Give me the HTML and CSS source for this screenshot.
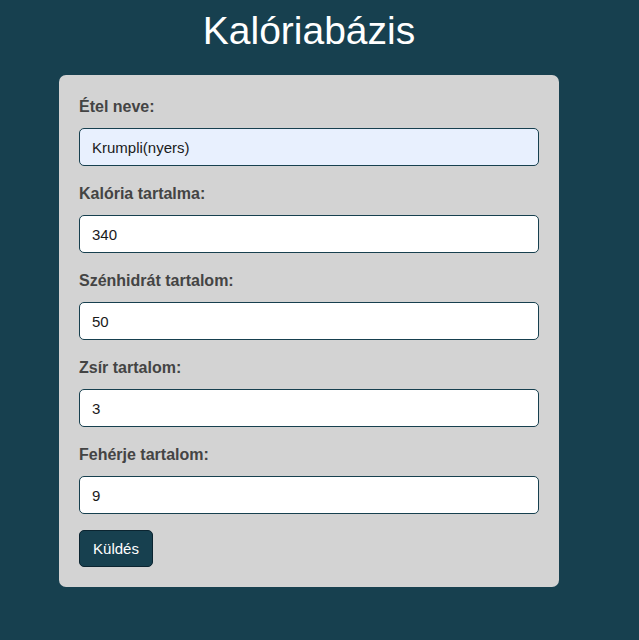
FILE: index.html
```html
<!DOCTYPE html>
<html lang="hu">
<head>
<meta charset="utf-8">
<title>Kalóriabázis</title>
<link rel="stylesheet" href="styles.css">
</head>
<body>
<div class="page">
  <h1 class="title">Kalóriabázis</h1>
  <form class="card">
    <div class="field">
      <label class="label" for="nev">Étel neve:</label>
      <input class="input input-filled" id="nev" type="text" value="Krumpli(nyers)">
    </div>
    <div class="field">
      <label class="label" for="kal">Kalória tartalma:</label>
      <input class="input" id="kal" type="text" value="340">
    </div>
    <div class="field">
      <label class="label" for="szh">Szénhidrát tartalom:</label>
      <input class="input" id="szh" type="text" value="50">
    </div>
    <div class="field">
      <label class="label" for="zsir">Zsír tartalom:</label>
      <input class="input" id="zsir" type="text" value="3">
    </div>
    <div class="field">
      <label class="label" for="feh">Fehérje tartalom:</label>
      <input class="input" id="feh" type="text" value="9">
    </div>
    <button class="button" type="button">Küldés</button>
  </form>
</div>
</body>
</html>
```
FILE: styles.css
```css
html, body {
  margin: 0;
  padding: 0;
  background: #17404f;
  font-family: "Liberation Sans", Arial, sans-serif;
}
.page {
  width: 618px;
  display: flex;
  flex-direction: column;
  align-items: center;
}
.title {
  margin: 8px 0 0;
  height: 67px;
  line-height: 46px;
  font-size: 39px;
  font-weight: normal;
  color: #ffffff;
}
.card {
  width: 500px;
  box-sizing: border-box;
  background: #d3d3d3;
  border-radius: 7px;
  padding: 20px;
  display: flex;
  flex-direction: column;
  align-items: flex-start;
}
.field {
  width: 100%;
  display: flex;
  flex-direction: column;
  margin-bottom: 16px;
}
.label {
  font-size: 16px;
  font-weight: bold;
  color: #444444;
  line-height: 24px;
  margin-bottom: 9px;
}
.input {
  box-sizing: border-box;
  width: 100%;
  height: 38px;
  border: 1px solid #17404f;
  border-radius: 5px;
  background: #ffffff;
  padding: 0 12px;
  font-family: "Liberation Sans", Arial, sans-serif;
  font-size: 15px;
  color: #1a1a1a;
  outline: none;
}
.input-filled {
  background: #e8f0fe;
}
.button {
  box-sizing: border-box;
  width: 74px;
  height: 37px;
  background: #17404f;
  border: 1px solid #0b2430;
  border-radius: 5px;
  color: #ffffff;
  font-family: "Liberation Sans", Arial, sans-serif;
  font-size: 15px;
  padding: 0;
}
```
